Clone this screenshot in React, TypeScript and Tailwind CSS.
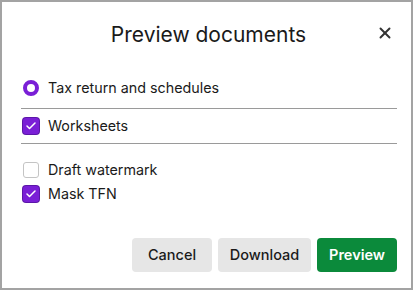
import { X, Check } from "lucide-react";

function Box({ checked }: { checked: boolean }) {
  return checked ? (
    <span className="flex h-4 w-4 items-center justify-center rounded-[3px] bg-[#7a1fd6] ring-1 ring-[#5b16a8]">
      <Check className="h-3 w-3 text-white" strokeWidth={3} />
    </span>
  ) : (
    <span className="h-4 w-4 rounded-[3px] border border-[#c4c4c4] bg-white" />
  );
}

export default function App() {
  return (
    <div className="h-[290px] w-[413px] border-2 border-[#a3a3a3] bg-white font-['Inter',sans-serif] text-[#1a1a1a]">
      <div className="relative flex h-[64px] items-center justify-center pl-[4px]">
        <h1 className="text-[21px] leading-none">Preview documents</h1>
        <button className="absolute right-[17px] top-[22px] text-[#333]">
          <X className="h-[18px] w-[18px]" strokeWidth={2.6} />
        </button>
      </div>
      <div className="pl-[19px] pr-[14px]">
        <label className="mt-[2px] flex h-[41px] items-center gap-[9px] border-b border-[#9a9a9a] pl-[2px]">
          <span className="h-4 w-4 rounded-full border-[4.5px] border-[#7a1fd6] bg-white" />
          <span className="text-[14.3px]">Tax return and schedules</span>
        </label>
        <label className="flex h-[35px] items-center gap-[9px] border-b border-[#9a9a9a] pl-[2px]">
          <Box checked />
          <span className="text-[14.3px]">Worksheets</span>
        </label>
        <div className="flex flex-col gap-[4px] pt-[16px] pl-[2px]">
          <label className="flex h-[20px] items-center gap-[9px]">
            <Box checked={false} />
            <span className="text-[14.3px]">Draft watermark</span>
          </label>
          <label className="flex h-[20px] items-center gap-[9px]">
            <Box checked />
            <span className="text-[14.3px]">Mask TFN</span>
          </label>
        </div>
        <div className="mt-[34px] flex justify-end gap-[6px]">
          <button className="h-[34px] w-[80px] rounded-[4px] bg-[#e6e6e6] text-[14.5px] font-medium">Cancel</button>
          <button className="h-[34px] w-[93px] rounded-[4px] bg-[#e6e6e6] text-[14.5px] font-medium">Download</button>
          <button className="h-[34px] w-[80px] rounded-[4px] bg-[#0b8a3b] text-[14.5px] font-semibold text-white">Preview</button>
        </div>
      </div>
    </div>
  );
}
